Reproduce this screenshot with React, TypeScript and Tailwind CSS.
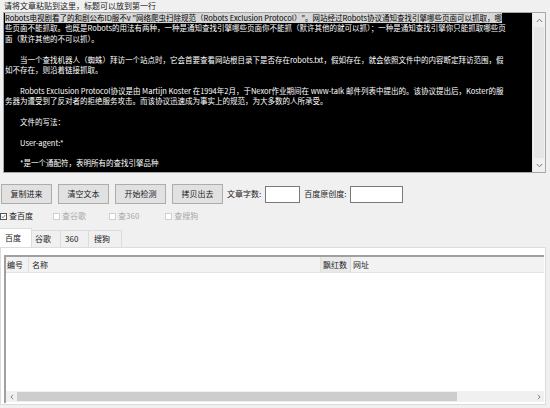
import React from "react";

const FONT = { fontFamily: '"Noto Sans CJK SC", "Noto Sans", sans-serif' };

const lines: { t: string; indent?: boolean; hl?: boolean }[] = [
  { t: 'Robots电视剧看了的和剧公布ID服不v "网络爬虫扫除规范（Robots Exclusion Protocol）"。网站经过Robots协议通知查找引擎哪些页面可以抓取，哪', hl: true },
  { t: "些页面不能抓取。也既是Robots的用法有两种，一种是通知查找引擎哪些页面你不能抓（默许其他的就可以抓）；一种是通知查找引擎你只能抓取哪些页" },
  { t: "面（默许其他的不可以抓）。" },
  { t: "" },
  { t: "当一个查找机器人（蜘蛛）拜访一个站点时，它会首要查看网站根目录下是否存在robots.txt，假如存在，就会依照文件中的内容断定拜访范围，假", indent: true },
  { t: "如不存在，则沿着链接抓取。" },
  { t: "" },
  { t: "Robots Exclusion Protocol协议是由 Martijn Koster 在1994年2月，于Nexor作业期间在 www-talk 邮件列表中提出的。该协议提出后，Koster的服", indent: true },
  { t: "务器为遭受到了反对者的拒绝服务攻击。而该协议迅速成为事实上的规范，为大多数的人所承受。" },
  { t: "" },
  { t: "文件的写法：", indent: true },
  { t: "" },
  { t: "User-agent:*", indent: true },
  { t: "" },
  { t: "*是一个通配符，表明所有的查找引擎品种", indent: true },
];

function Btn({ children }: { children: React.ReactNode }) {
  return (
    <div className="w-[51px] h-[20px] flex items-center justify-center bg-[#e1e1e1] border border-[#adadad] text-[8px] text-[#222]">
      {children}
    </div>
  );
}

function Check({ label, checked, disabled }: { label: string; checked?: boolean; disabled?: boolean }) {
  return (
    <div className="flex items-center gap-[2px] h-[10px]">
      <div
        className={
          "w-[7px] h-[7px] border flex items-center justify-center bg-white " +
          (disabled ? "border-[#d0d0d0]" : "border-[#555]")
        }
      >
        {checked && (
          <svg width="7" height="7" viewBox="0 0 7 7">
            <path d="M1 3.5 L2.8 5.3 L6 1.5" stroke="#333" strokeWidth="0.9" fill="none" />
          </svg>
        )}
      </div>
      <span className={"text-[8px] leading-[10px] " + (disabled ? "text-[#a8a8a8]" : "text-[#222]")}>{label}</span>
    </div>
  );
}

export default function App() {
  return (
    <div className="w-[550px] h-[408px] bg-[#f0f0f0] flex flex-col overflow-hidden text-[#222]" style={FONT}>
      <div className="h-[12px] pl-[4px] text-[8px] leading-[12px] text-[#222]">请将文章粘贴到这里，标题可以放到第一行</div>

      <div className="ml-[3px] w-[543px] h-[161px] border border-[#a8a8a8] bg-black flex">
        <div className="flex-1 pl-[1px] overflow-hidden text-white text-[7.5px] leading-[10.4px]">
          {lines.map((l, i) => (
            <div
              key={i}
              className={
                l.hl
                  ? "h-[10.4px] w-fit whitespace-nowrap bg-[#d6d6d6] text-black"
                  : "h-[10.4px] whitespace-nowrap"
              }
            >
              {l.indent ? "\u3000\u3000" : ""}
              {l.t}
            </div>
          ))}
        </div>
        <div className="w-[13px] bg-[#f0f0f0] flex flex-col border-l border-[#e6e6e6]">
          <div className="h-[14px] flex items-center justify-center">
            <svg width="7" height="5" viewBox="0 0 7 5">
              <path d="M0.8 4 L3.5 1.2 L6.2 4" stroke="#777" strokeWidth="1" fill="none" />
            </svg>
          </div>
          <div className="flex-1 mx-[1px] bg-[#e6e6e6]" />
          <div className="h-[14px] flex items-center justify-center">
            <svg width="7" height="5" viewBox="0 0 7 5">
              <path d="M0.8 1 L3.5 3.8 L6.2 1" stroke="#777" strokeWidth="1" fill="none" />
            </svg>
          </div>
        </div>
      </div>

      <div className="mt-[11px] ml-[1px] flex items-center h-[20px]">
        <div className="flex gap-[6px]">
          <Btn>复制进来</Btn>
          <Btn>清空文本</Btn>
          <Btn>开始检测</Btn>
          <Btn>拷贝出去</Btn>
        </div>
        <span className="ml-[4px] text-[8px]">文章字数:</span>
        <div className="ml-[4px] w-[35px] h-[17px] bg-white border border-[#7a7a7a]" />
        <span className="ml-[4px] text-[8px]">百度原创度:</span>
        <div className="ml-[4px] w-[53px] h-[17px] bg-white border border-[#7a7a7a]" />
      </div>

      <div className="mt-[7px] flex items-center">
        <Check label="查百度" checked />
        <div className="ml-[20px]">
          <Check label="查谷歌" disabled />
        </div>
        <div className="ml-[23px]">
          <Check label="查360" disabled />
        </div>
        <div className="ml-[26px]">
          <Check label="查搜狗" disabled />
        </div>
      </div>

      <div className="mt-[7px] flex items-end h-[19px] text-[8px]">
        <div className="h-[19px] w-[32px] pl-[5px] flex items-center bg-white border-t border-r border-[#dcdcdc]">百度</div>
        <div className="h-[17px] w-[29px] pl-[3px] flex items-center border-t border-r border-[#dcdcdc]">谷歌</div>
        <div className="h-[17px] w-[28px] pl-[4px] flex items-center border-t border-r border-[#dcdcdc]">360</div>
        <div className="h-[17px] w-[33px] pl-[5px] flex items-center border-t border-r border-[#dcdcdc]">搜狗</div>
      </div>

      <div className="w-[546px] h-[158px] bg-white border border-[#dcdcdc] pt-[7px] pl-[3px]">
        <div className="w-[540px] h-[148px] border-t-2 border-l-2 border-[#a0a0a0] flex flex-col">
          <div className="h-[16px] flex text-[8px] bg-[#f2f2f2] border-b border-[#e3e3e3]">
            <div className="w-[23px] pl-[1px] flex items-center border-r border-[#e0e0e0]">编号</div>
            <div className="w-[292px] pl-[3px] flex items-center border-r border-[#e0e0e0]">名称</div>
            <div className="w-[30px] pl-[2px] flex items-center bg-[#e9e9e9] border-r border-[#d8d8d8]">飘红数</div>
            <div className="flex-1 pl-[2px] flex items-center">网址</div>
          </div>
          <div className="flex-1" />
          <div className="h-[11px] flex bg-[#f0f0f0] mb-[1px]">
            <div className="w-[11px] flex items-center justify-center">
              <svg width="4" height="6" viewBox="0 0 4 6">
                <path d="M3 0.8 L1 3 L3 5.2" stroke="#777" strokeWidth="0.9" fill="none" />
              </svg>
            </div>
            <div className="w-[440px] bg-[#cdcdcd] my-[1px]" />
            <div className="flex-1" />
            <div className="w-[11px] flex items-center justify-center">
              <svg width="4" height="6" viewBox="0 0 4 6">
                <path d="M1 0.8 L3 3 L1 5.2" stroke="#777" strokeWidth="0.9" fill="none" />
              </svg>
            </div>
          </div>
        </div>
      </div>
    </div>
  );
}
